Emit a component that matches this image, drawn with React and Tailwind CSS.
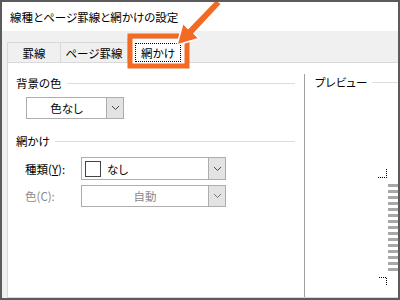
import React from "react";

function Chevron({ color = "#444" }) {
  return (
    <svg width="9" height="6" viewBox="0 0 9 6">
      <path d="M1 1 L4.5 4.5 L8 1" fill="none" stroke={color} strokeWidth="1" />
    </svg>
  );
}

function Dropdown({ w, h, children, center = true, disabled = false }) {
  return (
    <div className={`flex border border-[#adadad] bg-white ${w} ${h}`}>
      <div className={`flex-1 flex items-center ${center ? "justify-center" : "justify-start pl-[3px]"}`}>
        {children}
      </div>
      <div className="w-[17px] bg-[#e3e3e3] border-l border-[#adadad] flex items-center justify-center">
        <Chevron color={disabled ? "#777" : "#444"} />
      </div>
    </div>
  );
}

export default function App() {
  const stripes = Array.from({ length: 15 }, (_, i) => i);
  return (
    <div className="w-[400px] h-[300px] relative overflow-hidden border-2 border-[#5b5b5b] bg-[#f0f0f0] flex flex-col font-['Noto_Sans_CJK_JP','Noto_Sans',sans-serif] text-[11.5px] leading-[16px] text-black [font-feature-settings:'palt']">
      {/* title bar */}
      <div className="h-[29px] shrink-0 bg-white flex items-center pl-[8px]">
        線種とページ罫線と網かけの設定
      </div>

      <div className="flex-1 flex flex-col pl-[5px]">
        {/* tabs */}
        <div className="h-[31px] shrink-0 flex items-end">
          <div className="w-[53px] h-[20px] border-l border-t border-[#d9d9d9] flex items-center justify-center">
            罫線
          </div>
          <div className="w-[67px] h-[20px] border-l border-t border-[#d9d9d9] flex items-center justify-center">
            ページ罫線
          </div>
          <div className="w-[62px] h-[25px] -mb-px relative z-10 bg-white border-l border-r border-t border-[#d9d9d9] flex items-center justify-center">
            <span className="border border-dotted border-black px-[5px] h-[19px] flex items-center mt-[3px]">網かけ</span>
          </div>
        </div>

        {/* panel */}
        <div className="flex-1 flex bg-white border-l border-t border-b border-[#d9d9d9]">
          {/* left column */}
          <div className="w-[296px] shrink-0 flex flex-col pl-[8px] pr-[9px] pt-[12px]">
            <div className="h-[16px] flex items-center">
              <span>背景の色</span>
              <div className="flex-1 h-px bg-[#dcdcdc] ml-[5px]" />
            </div>
            <div className="mt-[6px] ml-[10px]">
              <Dropdown w="w-[98px]" h="h-[22px]">色なし</Dropdown>
            </div>

            <div className="h-[16px] flex items-center mt-[14px]">
              <span>網かけ</span>
              <div className="flex-1 h-px bg-[#dcdcdc] ml-[5px]" />
            </div>

            <div className="flex items-center mt-[8px] ml-[9px]">
              <div className="w-[56px]">
                種類(<span className="underline">Y</span>):
              </div>
              <Dropdown w="w-[145px]" h="h-[23px]" center={false}>
                <div className="w-[16px] h-[16px] border border-[#444] bg-white" />
                <span className="ml-[6px]">なし</span>
              </Dropdown>
            </div>

            <div className="flex items-center mt-[5px] ml-[9px] text-[#8a8a8a]">
              <div className="w-[56px]">色(C):</div>
              <Dropdown w="w-[145px]" h="h-[22px]" disabled>
                自動
              </Dropdown>
            </div>
          </div>

          {/* right column: preview */}
          <div className="flex-1 mt-[11px] border-l border-[#a0a0a0] relative">
            <div className="h-[16px] flex items-center pl-[10px]">
              <span>プレビュー</span>
              <div className="flex-1 h-px bg-[#dcdcdc] ml-[5px]" />
            </div>
            <svg className="absolute left-0 top-[-11px]" width="100" height="240">
              <g stroke="#000" strokeWidth="1" strokeDasharray="1 1" fill="none">
                <line x1="73" y1="114.5" x2="82" y2="114.5" />
                <line x1="81.5" y1="106" x2="81.5" y2="115" />
                <line x1="74" y1="214.5" x2="82" y2="214.5" />
                <line x1="81.5" y1="215" x2="81.5" y2="223" />
              </g>
              {stripes.map((i) => (
                <rect key={i} x="83" y={121 + i * 6} width="12" height="3" fill="#a8a8a8" />
              ))}
            </svg>
          </div>
        </div>
      </div>

      {/* annotation overlay */}
      <svg className="absolute left-[-2px] top-[-2px] z-20 pointer-events-none" width="400" height="300">
        <rect x="130" y="36" width="57" height="30" fill="none" stroke="#f26a24" strokeWidth="5" />
        <path
          d="M221.5 4 L194 33.5 L199 38.5 L177 45 L183 23 L188 28.5 L216 -0.5 Z"
          fill="#f26a24"
          stroke="#fff"
          strokeWidth="1.5"
          strokeLinejoin="round"
        />
      </svg>
    </div>
  );
}
